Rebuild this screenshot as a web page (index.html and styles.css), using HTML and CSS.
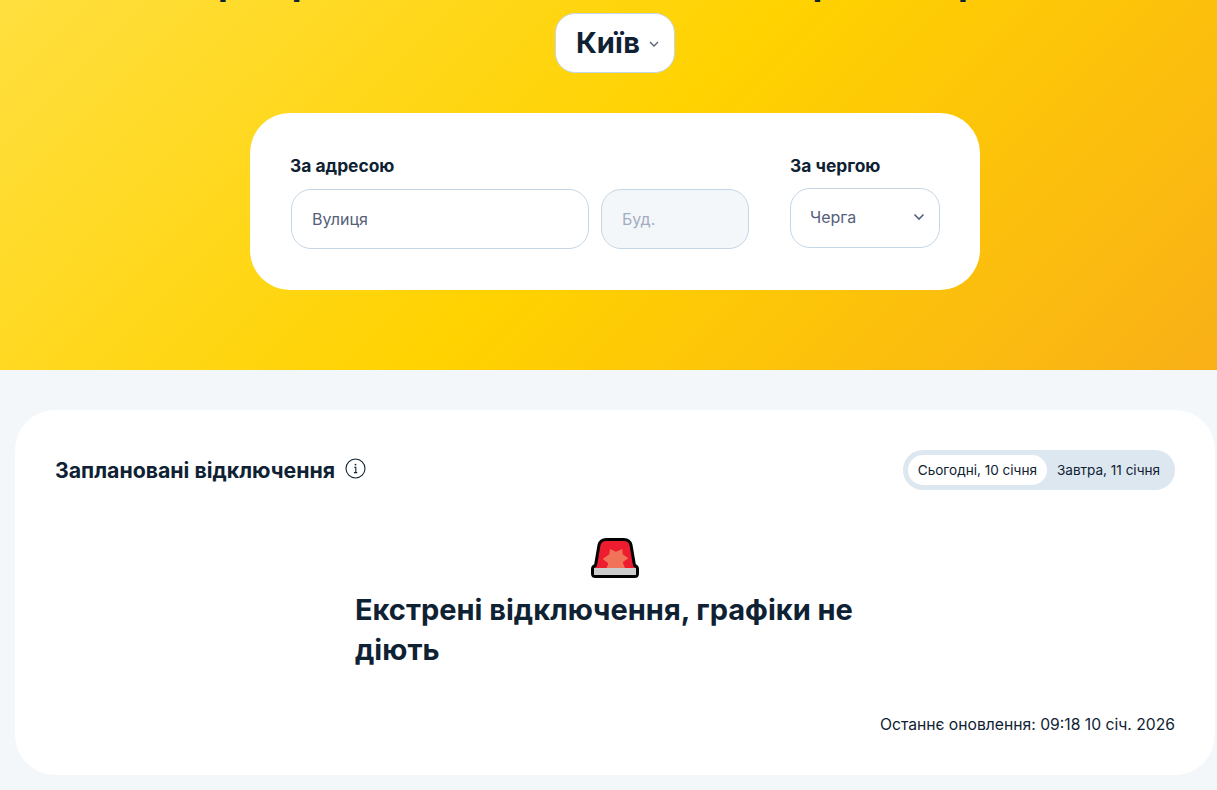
FILE: index.html
```html
<!DOCTYPE html>
<html lang="uk">
<head>
<meta charset="utf-8">
<title>Графіки відключень</title>
<link rel="stylesheet" href="styles.css">
</head>
<body>
<section class="hero">
  <div class="hero-title">Перевірте вимкнення світла за чергою й регіоном</div>
  <button class="city"><span>Київ</span>
    <svg class="city-chev" width="10" height="6" viewBox="0 0 10 6"><path d="M1 1l4 4 4-4" fill="none" stroke="#55607a" stroke-width="1.3"/></svg>
  </button>
  <div class="search">
    <div class="group group-addr">
      <div class="label">За адресою</div>
      <div class="fields">
        <div class="field field-street">Вулиця</div>
        <div class="field field-house">Буд.</div>
      </div>
    </div>
    <div class="group group-queue">
      <div class="label">За чергою</div>
      <div class="field field-queue"><span>Черга</span>
        <svg width="12" height="8" viewBox="0 0 12 8"><path d="M1.5 1.5L6 6l4.5-4.5" fill="none" stroke="#55607a" stroke-width="1.6"/></svg>
      </div>
    </div>
  </div>
</section>
<section class="main">
  <div class="card">
    <div class="card-head">
      <div class="card-title-wrap">
        <h2 class="card-title">Заплановані відключення</h2>
        <svg class="info" width="21" height="21" viewBox="0 0 21 21"><circle cx="10.500" cy="10.500" r="9.500" fill="none" stroke="#0f2233" stroke-width="1.1"/><circle cx="10.500" cy="6.600" r="0.900" fill="#0f2233"/><path d="M9.200 9.200h1.600v5.200M9 14.600h3.200" fill="none" stroke="#0f2233" stroke-width="1.1"/></svg>
      </div>
      <div class="tabs">
        <div class="tab tab-active">Сьогодні, 10 січня</div>
        <div class="tab">Завтра, 11 січня</div>
      </div>
    </div>
    <div class="notice">
      <svg class="siren" width="50" height="44" viewBox="0 0 50 44">
        <path d="M16 3.500H34C38 3.500 40 5.500 41 9L44.500 29.500C46.500 30 47.500 31.500 47.500 33V37.500C47.500 39.500 46 40.500 44.500 40.500H5.500C4 40.500 2.500 39.500 2.500 37.500V33C2.500 31.500 3.500 30 5.500 29.500L9 9C10 5.500 12 3.500 16 3.500Z" fill="#ed1c2e" stroke="#000" stroke-width="3" stroke-linejoin="round"/>
        <path d="M26 15.700L20 13L19.300 18.300L12.700 23L18.300 27.300L16.700 32H35L32.700 26.300L38.300 22.300L32.700 18.300L32.300 13Z" fill="#f1735a"/>
        <rect x="4" y="32" width="42" height="7" fill="#ccc"/>
      </svg>
      <h3 class="notice-title">Екстрені відключення, графіки не діють</h3>
    </div>
    <div class="updated">Останнє оновлення: 09:18 10 січ. 2026</div>
  </div>
</section>
</body>
</html>
```
FILE: styles.css
```css
* { box-sizing: border-box; }
html, body { margin: 0; padding: 0; }
body {
  width: 1217px;
  height: 790px;
  overflow: hidden;
  background: #f3f7fa;
  font-family: "Inter", "Noto Sans", sans-serif;
  color: #0f2233;
}
.hero {
  height: 370px;
  padding: 13px 0 0 13px;
  position: relative;
  display: flex;
  flex-direction: column;
  align-items: center;
  overflow: hidden;
  background: linear-gradient(135deg, #ffdf3f 0%, #ffd200 50%, #f9b017 100%);
}
.hero-title {
  position: absolute;
  left: 170px;
  top: -38px;
  white-space: nowrap;
  font-size: 36px;
  line-height: 40px;
  font-weight: 700;
  letter-spacing: -0.2px;
  word-spacing: 8px;
}
.city {
  width: 120px;
  height: 60px;
  display: flex;
  align-items: center;
  gap: 9px;
  padding: 0 0 0 20px;
  background: #fff;
  border: 1px solid #c5d6e6;
  border-radius: 20px;
  font: 700 29px/36px "Inter", sans-serif;
  color: #0f2233;
}
.city-chev { margin-top: 1px; }
.search {
  width: 730px;
  height: 177px;
  margin-top: 40px;
  padding: 40px;
  display: flex;
  justify-content: space-between;
  background: #fff;
  border-radius: 40px;
}
.label {
  font-size: 17.400px;
  line-height: 25px;
  font-weight: 700;
  margin-bottom: 11px;
}
.group-queue .label { margin-bottom: 10px; }
.fields { display: flex; gap: 12px; padding-left: 1px; }
.field {
  height: 60px;
  display: flex;
  align-items: center;
  border: 1px solid #c5d6e6;
  border-radius: 20px;
  font-size: 16px;
  color: #55607a;
}
.field-street { width: 298px; padding-left: 20px; background: #fff; }
.field-house { width: 148px; padding-left: 20px; background: #f3f7fa; color: #a3adbf; }
.field-queue {
  width: 150px;
  justify-content: space-between;
  padding: 0 14px 2px 19px;
  font-size: 16px;
}
.main { padding: 40px 2px 0 15px; }
.card {
  height: 365px;
  padding: 40px;
  background: #fff;
  border-radius: 40px;
  display: flex;
  flex-direction: column;
}
.card-head {
  display: flex;
  justify-content: space-between;
  align-items: center;
}
.card-title-wrap { display: flex; align-items: center; gap: 10px; }
.card-title {
  margin: 0;
  font-size: 21.300px;
  line-height: 40px;
  font-weight: 700;
}
.info { margin-top: -4px; }
.tabs {
  height: 40px;
  padding: 5px;
  display: flex;
  background: #dde7f0;
  border-radius: 20px;
}
.tab {
  padding: 0 10px;
  font-size: 13.550px;
  line-height: 30px;
  border-radius: 15px;
}
.tab-active { background: #fff; }
.notice {
  width: 520px;
  margin: 46px auto 0;
  display: flex;
  flex-direction: column;
  align-items: center;
}
.siren { display: block; }
.notice-title {
  align-self: stretch;
  margin: 10px 0 0;
  font-size: 29px;
  line-height: 40px;
  font-weight: 700;
}
.updated {
  margin-top: auto;
  margin-bottom: 1px;
  text-align: right;
  font-size: 15.700px;
  line-height: 18px;
}
```
